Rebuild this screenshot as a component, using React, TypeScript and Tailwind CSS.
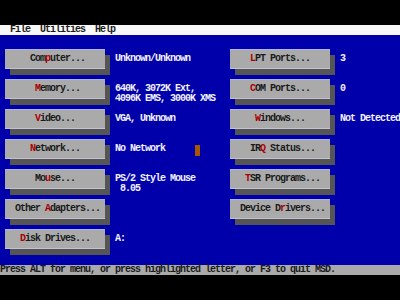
const font = 'font-["Liberation_Mono","DejaVu_Sans_Mono",monospace] font-bold text-[10px] leading-[10px] tracking-[-1px]';

type Btn = { label: string; hot: number; pad: string };

const rows: { left: Btn; info: string[]; right?: Btn; value?: string; cursor?: boolean }[] = [
  { left: { label: 'Computer...', hot: 3, pad: 'pl-[25px]' }, info: ['Unknown/Unknown'], right: { label: 'LPT Ports...', hot: 0, pad: 'pl-[20px]' }, value: '3' },
  { left: { label: 'Memory...', hot: 0, pad: 'pl-[30px]' }, info: ['640K, 3072K Ext,', '4096K EMS, 3000K XMS'], right: { label: 'COM Ports...', hot: 0, pad: 'pl-[20px]' }, value: '0' },
  { left: { label: 'Video...', hot: 0, pad: 'pl-[30px]' }, info: ['VGA, Unknown'], right: { label: 'Windows...', hot: 0, pad: 'pl-[25px]' }, value: 'Not Detected' },
  { left: { label: 'Network...', hot: 0, pad: 'pl-[25px]' }, info: ['No Network'], right: { label: 'IRQ Status...', hot: 2, pad: 'pl-[20px]' }, cursor: true },
  { left: { label: 'Mouse...', hot: 2, pad: 'pl-[30px]' }, info: ['PS/2 Style Mouse', ' 8.05'], right: { label: 'TSR Programs...', hot: 0, pad: 'pl-[15px]' } },
  { left: { label: 'Other Adapters...', hot: 6, pad: 'pl-[10px]' }, info: [], right: { label: 'Device Drivers...', hot: 8, pad: 'pl-[10px]' } },
  { left: { label: 'Disk Drives...', hot: 0, pad: 'pl-[15px]' }, info: ['A:'] },
];

function Button({ b }: { b: Btn }) {
  return (
    <div
      className={`flex items-center w-[100px] h-[20px] shrink-0 bg-[#aaaaaa] border-t border-t-[#b0b0ec] border-b border-b-[#c2c2d2] shadow-[5px_6px_0_0_#555555] text-[#1a1a1a] whitespace-pre ${b.pad}`}
    >
      {b.label.slice(0, b.hot)}
      <span className="text-[#aa0000]">{b.label[b.hot]}</span>
      {b.label.slice(b.hot + 1)}
    </div>
  );
}

export default function App() {
  return (
    <div className={`w-[400px] h-[300px] flex flex-col bg-black ${font}`}>
      <div className="h-[25px] shrink-0" />
      {/* Menu bar */}
      <div className="h-[10px] shrink-0 bg-[#f8f8f8] text-[#1a1a1a] whitespace-pre">{'  File  Utilities  Help'}</div>

      {/* Main panel */}
      <div className="flex-1 bg-[#0000aa] pt-[14px] flex flex-col gap-[10px]">
        {rows.map((r, i) => (
          <div key={i} className="flex h-[20px] pl-[5px]">
            <Button b={r.left} />
            <div className="ml-[10px] w-[115px] shrink-0 pt-[5px] text-[#f2f2ff] whitespace-pre">
              {r.info.map((line, j) => (
                <div key={j} className="flex items-start h-[10px]">
                  {line}
                  {r.cursor && j === 0 && <span className="ml-[30px] mt-[1px] w-[5px] h-[11px] bg-[#aa5500]" />}
                </div>
              ))}
            </div>
            {r.right && <Button b={r.right} />}
            {r.value && <div className="ml-[10px] pt-[5px] text-[#f2f2ff] whitespace-pre">{r.value}</div>}
          </div>
        ))}
      </div>

      {/* Status bar */}
      <div className="h-[10px] shrink-0 bg-[#aaaaaa] text-[#1a1a1a] whitespace-pre">
        Press ALT for menu, or press highlighted letter, or F3 to quit MSD.
      </div>
      <div className="h-[25px] shrink-0" />
    </div>
  );
}
